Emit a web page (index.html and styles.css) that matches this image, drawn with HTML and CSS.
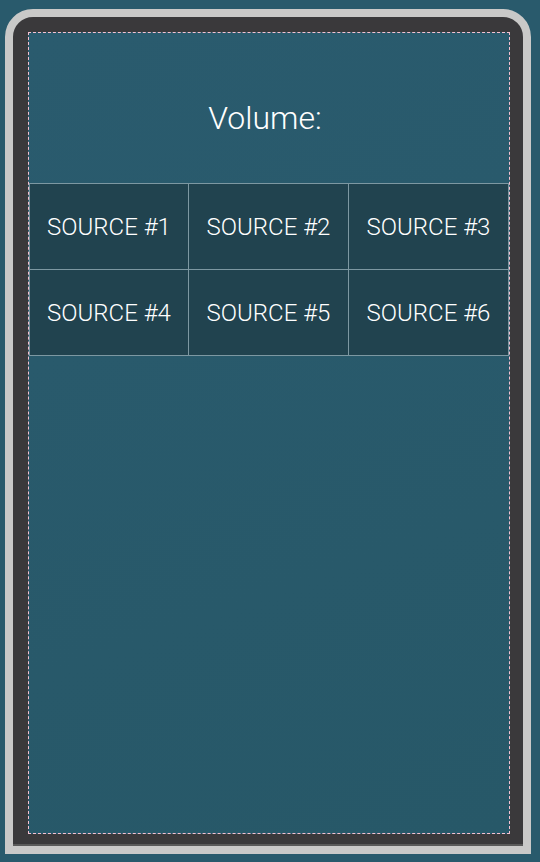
FILE: index.html
```html
<!DOCTYPE html>
<html lang="en">
<head>
    <meta charset="UTF-8">
    <meta name="viewport" content="width=device-width, initial-scale=1.0">
    <title>Volume</title>
    <link rel="stylesheet" href="styles.css">
</head>
<body>
    <div class="phone">
        <div class="screen">
            <h1 class="title">Volume:</h1>
            <div class="sources">
                <div class="source">SOURCE #1</div>
                <div class="source">SOURCE #2</div>
                <div class="source">SOURCE #3</div>
                <div class="source">SOURCE #4</div>
                <div class="source">SOURCE #5</div>
                <div class="source">SOURCE #6</div>
            </div>
        </div>
    </div>
</body>
</html>
```

FILE: styles.css
```css
body {
    margin: 0;
    background-color: #295a6c;
    font-family: Roboto, "Liberation Sans", sans-serif;
}
.phone {
    box-sizing: border-box;
    width: 526px;
    height: 845px;
    margin: 9px 0 0 5px;
    padding: 15px 13px 12px 15px;
    background-color: #3a393b;
    border: 8px solid #c9c9c8;
    border-radius: 28px 28px 0 0;
    box-shadow: inset 0 -2px 0 #5a5a5a;
}
.screen {
    box-sizing: border-box;
    height: 802px;
    border: 1px dashed #f6c1d1;
    background: linear-gradient(160deg, #2a5b6e 0%, #275868 100%);
    color: #fff;
}
.title {
    margin: 0;
    height: 150px;
    padding: 66px 8px 0 0;
    box-sizing: border-box;
    text-align: center;
    font-size: 32px;
    font-weight: 300;
}
.sources {
    display: grid;
    grid-template-columns: 159px 160px 1fr;
    border-top: 1px solid #7d98a2;
}
.source {
    height: 86px;
    padding-top: 1px;
    box-sizing: border-box;
    display: flex;
    align-items: center;
    justify-content: center;
    background-color: #21434f;
    border-bottom: 1px solid #7d98a2;
    border-left: 1px solid #7d98a2;
    font-size: 24px;
    font-weight: 300;
}
.source:nth-child(3n) {
    border-right: 1px solid #7d98a2;
}
```
